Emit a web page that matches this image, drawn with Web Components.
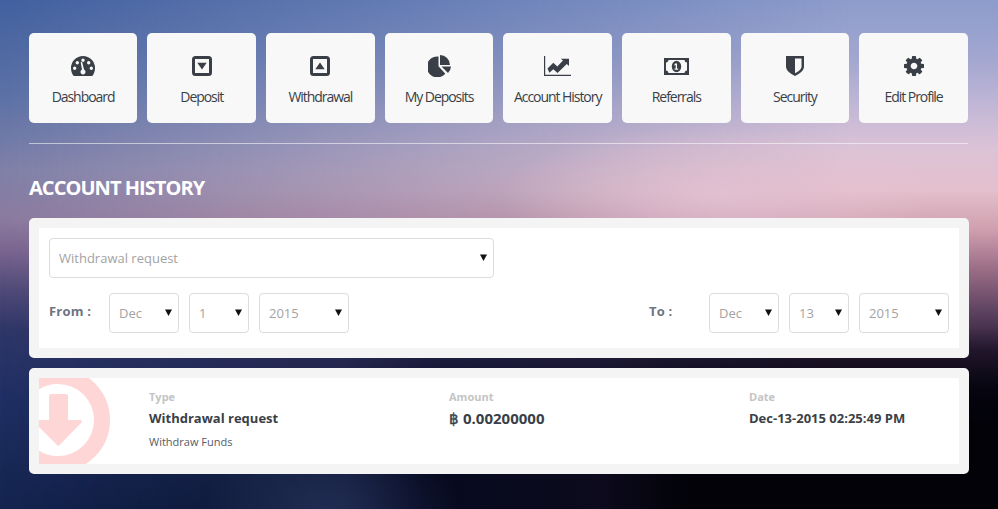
<!DOCTYPE html>
<html>
<head>
<meta charset="utf-8">
<title>Account History</title>
<style>
  html, body { margin: 0; height: 100%; }
  body {
    position: relative;
    width: 998px;
    height: 509px;
    overflow: hidden;
    font-family: "Open Sans", sans-serif;
    background: linear-gradient(180deg, #41609f 0, #5d72a6 100px, #7f80a8 170px, #8b7a9f 220px, #7a6590 250px, #4f4a78 290px, #2e3668 330px, #1f2f63 400px, #14244f 509px);
  }
  /* the sky is one vertical ramp per side, blended across the page */
  body::before {
    content: "";
    position: absolute;
    inset: 0;
    background: linear-gradient(180deg, #8c9ccc 0, #a3a7d0 60px, #c4b8d6 110px, #dcc3d6 150px, #e4bfcc 190px, #cf9fae 230px, #9a6c85 270px, #5f4462 310px, #2a1c35 350px, #0d0a1a 390px, #040410 430px, #020208 509px);
    -webkit-mask-image: linear-gradient(90deg, transparent 0, #000 850px);
    mask-image: linear-gradient(90deg, transparent 0, #000 850px);
  }
  body::after {
    content: "";
    position: absolute;
    inset: 0;
    background:
      radial-gradient(ellipse 220px 70px at 720px 195px, rgba(230,196,212,.75), rgba(230,196,212,0) 100%),
      radial-gradient(ellipse 130px 90px at 330px 515px, rgba(52,64,112,.55), rgba(52,64,112,0) 100%);
  }
  .shade {
    position: absolute;
    inset: 0;
    background: linear-gradient(90deg, transparent 350px, #060a20 425px, #0c0a1c 600px, #020208 690px);
    -webkit-mask-image: linear-gradient(180deg, transparent 330px, #000 440px);
    mask-image: linear-gradient(180deg, transparent 330px, #000 440px);
  }
  account-page { position: relative; z-index: 1; }
</style>
</head>
<body>
<div class="shade"></div>
<account-page></account-page>

<script>
class NavTile extends HTMLElement {
  constructor() {
    super();
    this.attachShadow({ mode: "open" });
  }

  connectedCallback() {
    this.shadowRoot.innerHTML = `
    <style>
      :host {
        display: flex;
        flex-direction: column;
        align-items: center;
        height: 90px;
        background: #f8f8f8;
        border-radius: 5px;
        color: #3a3f47;
      }
      .icon {
        height: 24px;
        margin-top: 21px;
        display: flex;
        align-items: center;
      }
      .label {
        margin-top: 7px;
        font-size: 14px;
        line-height: 24px;
        letter-spacing: -1.05px;
        white-space: nowrap;
      }
    </style>
    <div class="icon"><slot></slot></div>
    <div class="label">${this.getAttribute("label")}</div>
    `;
  }
}

class PickBox extends HTMLElement {
  constructor() {
    super();
    this.attachShadow({ mode: "open" });
  }

  connectedCallback() {
    this.shadowRoot.innerHTML = `
    <style>
      :host {
        display: flex;
        align-items: center;
        justify-content: space-between;
        box-sizing: border-box;
        height: 40px;
        padding: 0 6px 0 9px;
        background: #fff;
        border: 1px solid #dcdcdc;
        border-radius: 4px;
        color: #a3a3a3;
        font-size: 13px;
      }
      svg { display: block; margin-top: -2px; }
    </style>
    <span><slot></slot></span>
    <svg width="7" height="7" viewBox="0 0 7 7"><path d="M0 .5h7L3.500 7z" fill="#111"/></svg>
    `;
  }
}

class PanelCard extends HTMLElement {
  constructor() {
    super();
    this.attachShadow({ mode: "open" });
  }

  connectedCallback() {
    this.shadowRoot.innerHTML = `
    <style>
      :host {
        display: block;
        background: #fff;
        border: 10px solid #f4f4f4;
        border-radius: 5px;
        overflow: hidden;
      }
    </style>
    <slot></slot>
    `;
  }
}

class DateRange extends HTMLElement {
  constructor() {
    super();
    this.attachShadow({ mode: "open" });
  }

  connectedCallback() {
    const label = this.getAttribute("label");
    const [month, day, year] = this.getAttribute("value").split(" ");
    this.shadowRoot.innerHTML = `
    <style>
      :host {
        display: grid;
        grid-template-columns: 50px 70px 60px 90px;
        column-gap: 10px;
        align-items: center;
      }
      .label {
        font-size: 13px;
        font-weight: 700;
        letter-spacing: .2px;
        color: #6e7480;
        margin-top: -4px;
        white-space: nowrap;
      }
    </style>
    <div class="label">${label}</div>
    <pick-box>${month}</pick-box>
    <pick-box>${day}</pick-box>
    <pick-box>${year}</pick-box>
    `;
  }
}

class HistoryField extends HTMLElement {
  constructor() {
    super();
    this.attachShadow({ mode: "open" });
  }

  connectedCallback() {
    this.shadowRoot.innerHTML = `
    <style>
      :host { display: block; padding-top: 11px; }
      .name {
        font-size: 11px;
        font-weight: 700;
        line-height: 16px;
        color: #c4c4c4;
      }
      .value {
        margin-top: 3px;
        font-size: var(--value-size, 13px);
        font-weight: 700;
        line-height: 20px;
        color: #3a3f47;
        white-space: nowrap;
      }
      .note {
        margin-top: 5px;
        font-size: 11px;
        line-height: 18px;
        color: #555b66;
      }
    </style>
    <div class="name">${this.getAttribute("name")}</div>
    <div class="value"><slot></slot></div>
    ${this.hasAttribute("note") ? `<div class="note">${this.getAttribute("note")}</div>` : ""}
    `;
  }
}

class AccountPage extends HTMLElement {
  constructor() {
    super();
    this.attachShadow({ mode: "open" });
  }

  connectedCallback() {
    const ink = "#3a3f47";
    this.shadowRoot.innerHTML = `
    <style>
      :host {
        display: block;
        box-sizing: border-box;
        width: 998px;
        padding: 33px 29px 0;
      }
      nav {
        display: grid;
        grid-template-columns: repeat(8, 1fr);
        column-gap: 10px;
        width: 939.2px;
        margin-left: -.25px;
      }
      hr {
        width: 939px;
        height: 1px;
        margin: 20px 0 0;
        border: 0;
        background: rgba(255,255,255,.55);
      }
      h1 {
        margin: 30px 0 16px;
        font-size: 20px;
        line-height: 28px;
        font-weight: 700;
        letter-spacing: -.95px;
        color: #fff;
        text-transform: uppercase;
      }
      .filter {
        padding: 10px;
        height: 100px;
      }
      .filter .kind {
        width: 445px;
        font-size: 13px;
      }
      .dates {
        display: flex;
        justify-content: space-between;
        margin-top: 15px;
      }
      .entry { margin-top: 10px; }
      .row {
        position: relative;
        display: grid;
        grid-template-columns: 300px 300px 1fr;
        height: 86px;
        padding-left: 110px;
      }
      .row svg.mark {
        position: absolute;
        left: 0;
        top: 0;
      }
      .amount { --value-size: 15px; }
      .btc {
        display: inline-block;
        width: 14px;
        font-family: "DejaVu Sans", sans-serif;
        font-size: 15px;
        font-weight: 400;
        -webkit-text-stroke: .4px currentColor;
      }
      svg { display: block; }
    </style>
    <nav>
      <nav-tile label="Dashboard">
        <svg width="24" height="20" viewBox="0 0 24 20"><path fill-rule="evenodd" fill="${ink}" d="M12 0a12 12 0 0 1 12 12c0 2.800-.8 5.200-2 7.200-.4.500-.8.800-1.400.800H3.400c-.6 0-1-.3-1.400-.8C.8 17.200 0 14.800 0 12A12 12 0 0 1 12 0zm0 2.600a1.700 1.700 0 1 0 0 3.400 1.700 1.700 0 0 0 0-3.400zM6.300 5a1.700 1.700 0 1 0 0 3.400 1.700 1.700 0 0 0 0-3.400zm11.400 0a1.700 1.700 0 1 0 0 3.400 1.700 1.700 0 0 0 0-3.400zM3.700 10.600a1.700 1.700 0 1 0 0 3.400 1.700 1.700 0 0 0 0-3.400zm16.600 0a1.700 1.700 0 1 0 0 3.400 1.700 1.700 0 0 0 0-3.400zM9.700 6.600l1.300 7a2.500 2.500 0 1 0 2 0l-1.800-7.300a.8.800 0 0 0-1.500.3z"/></svg>
      </nav-tile>
      <nav-tile label="Deposit">
        <svg width="20" height="20" viewBox="0 0 20 20"><path fill-rule="evenodd" fill="${ink}" d="M3.500 0h13A3.500 3.500 0 0 1 20 3.500v13a3.500 3.500 0 0 1-3.500 3.500h-13A3.500 3.500 0 0 1 0 16.500v-13A3.500 3.500 0 0 1 3.500 0zM3 3v14h14V3zm2.300 3.800h9.400L10 13.600z"/></svg>
      </nav-tile>
      <nav-tile label="Withdrawal">
        <svg width="20" height="20" viewBox="0 0 20 20"><path fill-rule="evenodd" fill="${ink}" d="M3.500 0h13A3.500 3.500 0 0 1 20 3.500v13a3.500 3.500 0 0 1-3.500 3.500h-13A3.500 3.500 0 0 1 0 16.500v-13A3.500 3.500 0 0 1 3.500 0zM3 3v14h14V3zm2.300 10.200h9.400L10 6.400z"/></svg>
      </nav-tile>
      <nav-tile label="My Deposits">
        <svg width="23" height="22" viewBox="0 0 23 22"><path fill="${ink}" d="M10.500 1.500v9.800l6.800 7.400A10.500 10.500 0 1 1 10.500 1.500z"/><path fill="${ink}" d="M12 0a10 10 0 0 1 10 10H12z"/><path fill="${ink}" d="M13.500 11.500H23a10 10 0 0 1-3 6.600z"/></svg>
      </nav-tile>
      <nav-tile label="Account History">
        <svg width="27" height="20" viewBox="0 0 27 20"><path fill="${ink}" d="M0 0h1.200v18.800H27V20H0z"/><path fill="${ink}" d="M3.500 14.500l5.800-6.200 4 4 5.700-6.500-2.200-2.200H25v8.200l-2.200-2.200-9.300 10-4.200-4.200-3.900 4z" transform="translate(0 -.6) scale(1 .9)"/></svg>
      </nav-tile>
      <nav-tile label="Referrals">
        <svg width="25" height="17" viewBox="0 0 25 17"><path fill-rule="evenodd" fill="${ink}" d="M0 0h25v17H0zM4.500 2C4.300 3.500 3.500 4.300 2 4.500v8c1.500.2 2.300 1 2.500 2.500h16c.2-1.500 1-2.300 2.500-2.500v-8c-1.500-.2-2.300-1-2.500-2.500z"/><ellipse cx="12.500" cy="8.500" rx="4.700" ry="5.700" fill="${ink}"/><path fill="#f8f8f8" d="M11 5.500h2v5h1.200v1.300h-3.600v-1.300h1.100V7l-1.200.7V6.300z"/></svg>
      </nav-tile>
      <nav-tile label="Security">
        <svg width="18" height="20" viewBox="0 0 18 20"><path fill="${ink}" d="M0 0h18v10.500c0 2-1 3.800-2.800 5.500A24 24 0 0 1 9 20a24 24 0 0 1-6.200-4C1 14.300 0 12.500 0 10.500z"/><path fill="#f8f8f8" d="M9 2.500h6.500v8c0 1.500-.8 2.800-2.200 4.100A20 20 0 0 1 9 17.200z"/></svg>
      </nav-tile>
      <nav-tile label="Edit Profile">
        <svg width="20" height="20" viewBox="0 0 1536 1536"><path fill="${ink}" d="M1024 768q0-106-75-181t-181-75-181 75-75 181 75 181 181 75 181-75 75-181zm512-109v222q0 12-8 23t-20 13l-185 28q-19 54-39 91 35 50 107 138 10 12 10 25t-9 23q-27 37-99 108t-94 71q-12 0-26-9l-138-108q-44 23-91 38-16 136-29 186-7 28-36 28h-222q-14 0-24.500-8.500t-11.500-21.500l-28-184q-49-16-90-37l-141 107q-10 9-25 9-14 0-25-11-126-114-165-168-7-10-7-23 0-12 8-23 15-21 51-66.500t54-70.500q-27-50-41-99l-183-27q-13-2-21-12.500t-8-23.500v-222q0-12 8-23t19-13l186-28q14-46 39-92-40-57-107-138-10-12-10-24 0-10 9-23 26-36 98.500-107.500t94.500-71.500q13 0 26 10l138 107q44-23 91-38 16-136 29-186 7-28 36-28h222q14 0 24.500 8.500t11.500 21.500l28 184q49 16 90 37l142-107q9-9 24-9 13 0 25 10 129 119 165 170 7 8 7 22 0 12-8 23-15 21-51 66.500t-54 70.500q26 50 41 98l183 28q13 2 21 12.500t8 23.500z"/></svg>
      </nav-tile>
    </nav>
    <hr>
    <h1>Account History</h1>
    <panel-card>
      <div class="filter">
        <pick-box class="kind">Withdrawal request</pick-box>
        <div class="dates">
          <date-range label="From :" value="Dec 1 2015"></date-range>
          <date-range label="To :" value="Dec 13 2015"></date-range>
        </div>
      </div>
    </panel-card>
    <panel-card class="entry">
      <div class="row">
        <svg class="mark" width="110" height="86" viewBox="0 0 110 86"><circle cx="19" cy="42" r="44" fill="none" stroke="#ffd6d6" stroke-width="16"/><path fill="#ffd6d6" d="M10 18a2 2 0 0 1 2-2h15a2 2 0 0 1 2 2v24h12c2 0 2.500 1.500 1.500 2.500L20.500 67a1.500 1.500 0 0 1-2.500 0L0 49V42h10z"/></svg>
        <history-field name="Type" note="Withdraw Funds">Withdrawal request</history-field>
        <history-field name="Amount" class="amount"><span class="btc">&#x0E3F;</span>0.00200000</history-field>
        <history-field name="Date">Dec-13-2015 02:25:49 PM</history-field>
      </div>
    </panel-card>
    `;
  }
}

customElements.define("nav-tile", NavTile);
customElements.define("pick-box", PickBox);
customElements.define("panel-card", PanelCard);
customElements.define("date-range", DateRange);
customElements.define("history-field", HistoryField);
customElements.define("account-page", AccountPage);
</script>
</body>
</html>
